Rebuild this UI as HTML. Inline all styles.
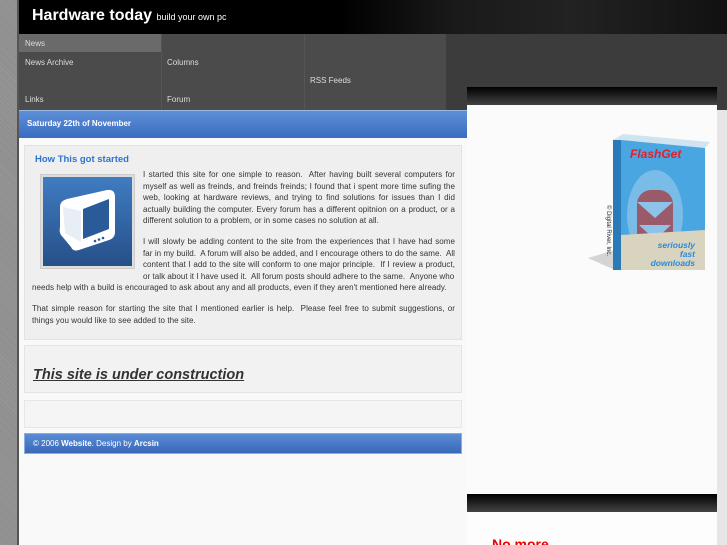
<!DOCTYPE html>
<html><head><meta charset="utf-8"><style>
*{margin:0;padding:0;box-sizing:border-box}
html,body{width:727px;height:545px;overflow:hidden}
body{background:#8c8c8c;font-family:"Liberation Sans",sans-serif;position:relative}
.abs{position:absolute}
.nav{font-size:8px;color:#ddd}
.nav div{position:absolute}
p{font-size:8px;line-height:11.5px;color:#333;text-align:justify;letter-spacing:0.05px}
</style></head><body>
<div class="abs" style="left:0;top:0;width:19px;height:545px;background:repeating-linear-gradient(45deg,#8a8a8a 0 1px,#999 1px 2px)"></div>
<div class="abs" style="left:17px;top:0;width:3px;height:545px;background:#555"></div>
<div class="abs" style="left:19px;top:0;width:708px;height:34px;background:#000"></div>
<div class="abs" style="left:340px;top:0;width:387px;height:34px;background:linear-gradient(90deg,#000,#1a1a1a 30%,#222 60%,#111)"></div>
<div class="abs" style="left:32px;top:7px;color:#fff;font-size:16px;font-weight:bold;white-space:nowrap">Hardware today <span style="font-size:9px;font-weight:normal">build your own pc</span></div>
<div class="abs nav" style="left:19px;top:34px;width:427px;height:76px;background:#4b4b4b">
<div style="left:0;top:0;width:142px;height:18px;background:#6a6a6a"></div>
<div style="left:142px;top:0;width:1px;height:76px;background:#555"></div>
<div style="left:285px;top:0;width:1px;height:76px;background:#555"></div>
<div style="left:6px;top:5px">News</div>
<div style="left:6px;top:24px">News Archive</div>
<div style="left:148px;top:24px">Columns</div>
<div style="left:291px;top:42px">RSS Feeds</div>
<div style="left:6px;top:61px">Links</div>
<div style="left:148px;top:61px">Forum</div>
</div>
<div class="abs" style="left:446px;top:34px;width:281px;height:76px;background:#3c3c3c"></div>
<div class="abs" style="left:717px;top:110px;width:10px;height:435px;background:#e6e6e6"></div>
<div class="abs" style="left:19px;top:110px;width:448px;height:435px;background:#f9f9f9"></div>
<div class="abs" style="left:19px;top:110px;width:448px;height:28px;background:linear-gradient(180deg,#5d8fd8,#3a6cc0);border-top:1px solid #9bb9e6"></div>
<div class="abs" style="left:27px;top:119px;color:#fff;font-size:8px;font-weight:bold">Saturday 22th of November</div>
<div class="abs" style="left:24px;top:145px;width:438px;height:195px;background:#efefef;border:1px solid #e2e2e2"></div>
<div class="abs" style="left:35px;top:154px;color:#2a74d2;font-size:9.5px;font-weight:bold">How This got started</div>
<div class="abs" style="left:40px;top:174px;width:95px;height:95px;background:#ddd;border:1px solid #ccc;padding:2px">
<svg width="89" height="89" viewBox="0 0 89 89"><defs><linearGradient id="g" x1="0" y1="0" x2="0" y2="1"><stop offset="0" stop-color="#3f7cc2"/><stop offset="1" stop-color="#264f88"/></linearGradient></defs><rect width="89" height="89" fill="url(#g)"/><path d="M17 30 Q17 24 24 22 L64 13 Q72 12 72 20 L72 55 Q72 61 66 63 L36 73 Q30 75 28 70 L18 58 Q16 55 17 50 Z" fill="#fff"/><path d="M40 32 L66 22 L66 52 L40 62 Z" fill="#2a5a98"/><path d="M20 30 L38 34 L38 65 L22 56 Z" fill="#e8eef6"/><circle cx="52" cy="64" r="1.3" fill="#2a5a98"/><circle cx="56" cy="62.5" r="1.3" fill="#2a5a98"/><circle cx="60" cy="61" r="1.3" fill="#2a5a98"/></svg></div>
<div class="abs" style="left:32px;top:169px;width:423px">
<p style="margin-left:111px">I started this site for one simple to reason.&nbsp; After having built several computers for myself as well as freinds, and freinds freinds; I found that i spent more time sufing the web, looking at hardware reviews, and trying to find solutions for issues than I did actually building the computer. Every forum has a different opitnion on a product, or a different solution to a problem, or in some cases no solution at all.</p>
<p style="margin-top:9.5px;margin-left:111px">I will slowly be adding content to the site from the experiences that I have had some far in my build.&nbsp; A forum will also be added, and I encourage others to do the same.&nbsp; All content that I add to the site will conform to one major principle.&nbsp; If I review a product, or talk about it I have used it.&nbsp; All forum posts should adhere to the same.&nbsp;&nbsp;Anyone who</p>
<p style="text-align:left">needs help with a build is encouraged to ask about any and all products, even if they aren't mentioned here already.</p>
<p style="margin-top:9.5px">That simple reason for starting the site that I mentioned earlier is help.&nbsp; Please feel free to submit suggestions, or things you would like to see added to the site.</p>
</div>
<div class="abs" style="left:24px;top:345px;width:438px;height:48px;background:#f2f2f2;border:1px solid #e4e4e4"></div>
<div class="abs" style="left:33px;top:367px;font-size:14.5px;font-weight:bold;font-style:italic;text-decoration:underline;color:#333">This site is under construction</div>
<div class="abs" style="left:24px;top:400px;width:438px;height:28px;background:#f5f5f5;border:1px solid #e6e6e6"></div>
<div class="abs" style="left:24px;top:433px;width:438px;height:21px;background:linear-gradient(180deg,#5a8cd6,#3a68b8);border:1px solid #8aaee0"></div>
<div class="abs" style="left:33px;top:439px;color:#fff;font-size:8px">© 2006 <b>Website</b>. Design by <b>Arcsin</b></div>
<div class="abs" style="left:467px;top:87px;width:250px;height:18px;background:linear-gradient(180deg,#000,#444)"></div>
<div class="abs" style="left:467px;top:105px;width:250px;height:389px;background:#fbfbfb"></div>
<div class="abs" style="left:467px;top:494px;width:250px;height:18px;background:linear-gradient(180deg,#000,#444)"></div>
<div class="abs" style="left:467px;top:512px;width:250px;height:33px;background:#fdfdfd"></div>
<div class="abs" style="left:492px;top:536px;color:#e00;font-size:14px;font-weight:bold">No more</div>
<svg class="abs" style="left:585px;top:130px" width="135" height="145" viewBox="0 0 135 145">
<path d="M3 128 L30 120 L30 140 Z" fill="#bbb" opacity=".6"/>
<path d="M28 10 L38 4 L125 12 L120 18 Z" fill="#cfe3f0"/>
<rect x="28" y="10" width="8" height="130" fill="#2a7ab8"/>
<path d="M36 10 L120 18 L120 140 L36 140 Z" fill="#4aa6e0"/>
<ellipse cx="70" cy="85" rx="28" ry="45" fill="#8cc6ea" opacity=".7"/>
<rect x="52" y="60" width="36" height="60" rx="14" fill="#9a5a6a"/>
<path d="M52 72 L88 72 L70 88 Z M54 95 L86 95 L70 110 Z" fill="#8ec2e8"/>
<path d="M36 105 L120 100 L120 140 L36 140 Z" fill="#d8d4c0"/>
<text x="45" y="28" font-family="Liberation Sans" font-size="12" font-style="italic" font-weight="bold" fill="#e02030">FlashGet</text>
<text x="110" y="118" text-anchor="end" font-family="Liberation Sans" font-size="8.5" font-style="italic" font-weight="bold" fill="#2a8ad8">seriously</text>
<text x="110" y="127" text-anchor="end" font-family="Liberation Sans" font-size="8.5" font-style="italic" font-weight="bold" fill="#2a8ad8">fast</text>
<text x="110" y="136" text-anchor="end" font-family="Liberation Sans" font-size="8.5" font-style="italic" font-weight="bold" fill="#2a8ad8">downloads</text>
<text transform="translate(22,75) rotate(90)" font-family="Liberation Sans" font-size="6" fill="#222">© Digital River, Inc.</text>
</svg>
</body></html>
